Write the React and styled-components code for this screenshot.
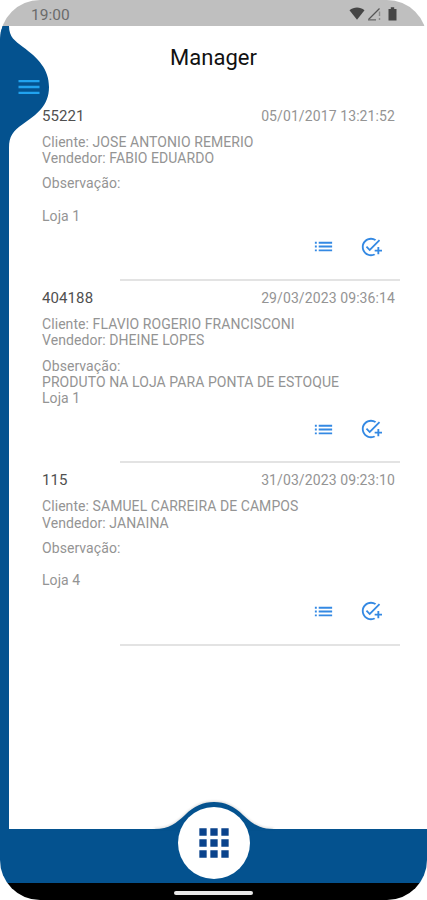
import React from "react";
import styled, { createGlobalStyle } from "styled-components";
import { MdList, MdAddTask, MdApps, MdMenu } from "react-icons/md";

const orders = [
  {
    id: "55221",
    date: "05/01/2017 13:21:52",
    cliente: "JOSE ANTONIO REMERIO",
    vendedor: "FABIO EDUARDO",
    obs: "",
    loja: "Loja 1",
  },
  {
    id: "404188",
    date: "29/03/2023 09:36:14",
    cliente: "FLAVIO ROGERIO FRANCISCONI",
    vendedor: "DHEINE LOPES",
    obs: "PRODUTO NA LOJA PARA PONTA DE ESTOQUE",
    loja: "Loja 1",
  },
  {
    id: "115",
    date: "31/03/2023 09:23:10",
    cliente: "SAMUEL CARREIRA DE CAMPOS",
    vendedor: "JANAINA",
    obs: "",
    loja: "Loja 4",
  },
];

const OrderItem = ({ order }) => {
  return (
    <StItem>
      <StItemHead>
        <StNumber>{order.id}</StNumber>
        <StDate>{order.date}</StDate>
      </StItemHead>
      <StLines>
        <p>Cliente: {order.cliente}</p>
        <p>Vendedor: {order.vendedor}</p>
      </StLines>
      <StLines>
        <p>Observação:</p>
        <p>{order.obs}</p>
        <p>{order.loja}</p>
      </StLines>
      <StActions>
        <StIconButton aria-label="Itens">
          <MdList size={23} />
        </StIconButton>
        <StIconButton aria-label="Confirmar">
          <MdAddTask size={22} />
        </StIconButton>
      </StActions>
    </StItem>
  );
};

const App = () => {
  return (
    <>
      <GlobalStyle />
      <StPhone>
        <StStatusBar>
          <span>19:00</span>
          <StStatusIcons>
            <svg width="16" height="13" viewBox="0 0 16 13">
              <path d="M0.5 3.2C5 -0.4 11 -0.4 15.5 3.2L8 12.8Z" fill="#454545" />
            </svg>
            <svg width="15" height="14" viewBox="0 0 15 14">
              <path d="M1.5 12.5L12.5 1.5" stroke="#555" strokeWidth="1.3" />
              <path d="M1 12.8H9" stroke="#666" strokeWidth="1.2" />
              <path d="M12.5 4.5V9M12.5 11V13" stroke="#8a8a8a" strokeWidth="1.4" />
            </svg>
            <svg width="9" height="14" viewBox="0 0 9 14">
              <path d="M0.5 2H2.8V0.3H6.2V2H8.5V13.6H0.5Z" fill="#454545" />
            </svg>
          </StStatusIcons>
        </StStatusBar>
        <StBody>
          <StContent>
            <StTitle>Manager</StTitle>
            {orders.map((order) => (
              <OrderItem key={order.id} order={order} />
            ))}
          </StContent>
          <StDrawerHandle aria-label="Menu">
            <svg width="50" height="122" viewBox="0 0 50 122">
              <path
                d="M0 0H9C9 11 15 15 23 21C38 32 49 43 49 61C49 80 36 89 23 98C13 105 9 110 9 122H0Z"
                fill="#04528f"
              />
            </svg>
            <MdMenu size={28} />
          </StDrawerHandle>
        </StBody>
        <StFooter>
          <StHump width="120" height="29" viewBox="0 0 120 29">
            <path
              d="M0 28C16 28 22 22 31 14C40 5 49 1 60 1C71 1 80 5 89 14C98 22 104 28 120 28V29H0Z"
              fill="#04528f"
            />
          </StHump>
          <StAppsButton aria-label="Apps">
            <MdApps size={44} />
          </StAppsButton>
        </StFooter>
        <StNavBar>
          <StNavPill />
        </StNavBar>
      </StPhone>
    </>
  );
};

export default App;

const GlobalStyle = createGlobalStyle`
  * {
    box-sizing: border-box;
  }
  body {
    margin: 0;
    background: #fff;
    font-family: Roboto, "Liberation Sans", sans-serif;
  }
  p, h1 {
    margin: 0;
  }
  button {
    padding: 0;
    border: none;
    background: none;
  }
  svg {
    display: block;
  }
`;

const StPhone = styled.div`
  width: 427px;
  height: 900px;
  display: flex;
  flex-direction: column;
  border-radius: 40px;
  overflow: hidden;
  background: #fff;
`;

const StStatusBar = styled.header`
  height: 26px;
  flex: none;
  display: flex;
  align-items: center;
  justify-content: space-between;
  padding: 3px 30px 0 31px;
  background: #bfbfbf;
  color: #6b6b6b;
  font-size: 15.5px;
`;

const StStatusIcons = styled.div`
  display: flex;
  align-items: center;
  gap: 2px;
  margin-top: -2px;
  svg:last-child {
    margin-left: 4px;
  }
`;

const StBody = styled.main`
  flex: 1;
  position: relative;
  border-left: 9px solid #04528f;
`;

const StContent = styled.div`
  padding: 0 27px 0 33px;
`;

const StTitle = styled.h1`
  height: 73px;
  padding-top: 18px;
  text-align: center;
  font-size: 22px;
  line-height: 28px;
  font-weight: 400;
  color: #111;
  margin-left: -33px;
  margin-right: -18px;
`;

const StItem = styled.article`
  height: 182.2px;
  display: flex;
  flex-direction: column;
  padding-top: 7px;
  &::after {
    content: "";
    margin-left: 78px;
    margin-top: auto;
    height: 2px;
    background: #e3e3e3;
  }
`;

const StItemHead = styled.div`
  display: flex;
  justify-content: space-between;
  align-items: center;
  padding-right: 5px;
  line-height: 20px;
`;

const StNumber = styled.span`
  font-size: 15px;
  letter-spacing: 0.1px;
  color: #505050;
`;

const StDate = styled.span`
  font-size: 14px;
  letter-spacing: 0.1px;
  color: #949494;
`;

const StLines = styled.div`
  margin-top: 8px;
  font-size: 14px;
  letter-spacing: 0.07px;
  color: #949494;
  p {
    height: 16.2px;
    line-height: 16.2px;
    white-space: nowrap;
  }
  & + & {
    margin-top: 9px;
  }
`;

const StActions = styled.div`
  display: flex;
  justify-content: flex-end;
  gap: 25px;
  padding-right: 18px;
  margin-top: 11px;
`;

const StIconButton = styled.button`
  height: 24px;
  display: flex;
  align-items: center;
  color: #3489e3;
`;

const StDrawerHandle = styled.button`
  position: absolute;
  left: -9px;
  top: 0;
  svg:last-child {
    position: absolute;
    left: 15px;
    top: 46.5px;
    color: #21a3ef;
  }
`;

const StFooter = styled.footer`
  height: 54px;
  flex: none;
  position: relative;
  display: flex;
  justify-content: center;
  background: #04528f;
`;

const StHump = styled.svg`
  position: absolute;
  left: 154px;
  top: -28px;
  filter: drop-shadow(0 -1px 1px rgba(0, 0, 0, 0.15));
`;

const StAppsButton = styled.button`
  position: relative;
  width: 72px;
  height: 72px;
  margin-top: -22px;
  display: flex;
  align-items: center;
  justify-content: center;
  border-radius: 50%;
  background: #fff;
  color: #0a438c;
`;

const StNavBar = styled.div`
  height: 17px;
  flex: none;
  display: flex;
  justify-content: center;
  padding-top: 8px;
  background: #000;
`;

const StNavPill = styled.div`
  width: 79px;
  height: 4px;
  border-radius: 2px;
  background: #e8e8e8;
`;
